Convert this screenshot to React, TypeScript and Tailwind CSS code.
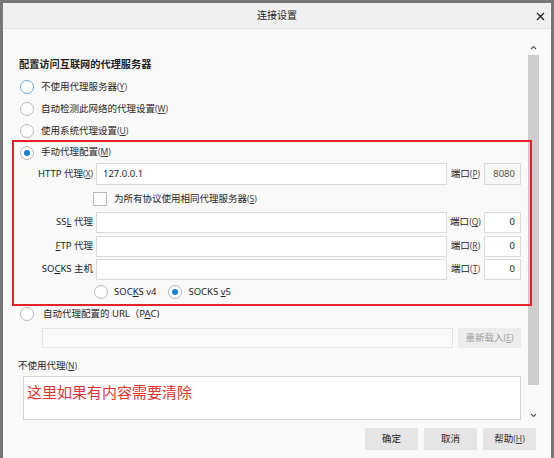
import React from "react";

const font = { fontFamily: '"Noto Sans", "Noto Sans CJK SC", sans-serif' };

function Key({ k }: { k: string }) {
  return (
    <span className="text-[8.5px] text-[#444]">
      (<span className="underline">{k}</span>)
    </span>
  );
}

function Radio({ checked, focus }: { checked?: boolean; focus?: boolean }) {
  return (
    <span
      className={`flex h-[14px] w-[14px] shrink-0 items-center justify-center rounded-full border bg-white ${
        focus ? "border-[#6aa6dc]" : "border-[#b9b9b9]"
      }`}
    >
      {checked && <span className="h-[6px] w-[6px] rounded-full bg-[#1a7dd0]" />}
    </span>
  );
}

function RadioRow({ label, k, checked, focus, h = "h-[22px]" }: { label: string; k: string; checked?: boolean; focus?: boolean; h?: string }) {
  return (
    <div className={`flex ${h} items-center gap-[7px] pl-[8px]`}>
      <Radio checked={checked} focus={focus} />
      <span className="whitespace-nowrap">
        {label}
        <Key k={k} />
      </span>
    </div>
  );
}

function ProxyRow({ label, k, port, value, portKey, mt, first }: { label: React.ReactNode; k?: string; port: string; value?: string; portKey: string; mt: string; first?: boolean }) {
  return (
    <div className={`flex h-[21px] items-stretch gap-[2px] ${mt}`}>
      <div className="flex w-[82px] items-center justify-end whitespace-nowrap pr-[1px]">
        {label}
        {k && <Key k={k} />}
      </div>
      <div className="flex flex-1 items-center border border-[#dadada] bg-white px-[6px]">{value}</div>
      <div className="flex w-[33px] items-center justify-center whitespace-nowrap">
        端口<Key k={portKey} />
      </div>
      <div
        className={`flex w-[37px] items-center justify-end border border-[#dadada] pr-[5px] ${
          first ? "bg-[#f6f6f6] text-[#555]" : "bg-white"
        }`}
      >
        {port}
      </div>
    </div>
  );
}

export default function App() {
  return (
    <div className="h-[458px] w-[554px] overflow-hidden bg-[#777] px-[3px] pt-[3px] text-[9.5px] text-[#1e1e1e]" style={font}>
      <div className="flex h-full flex-col bg-[#f9f9f9]">
        <div className="relative flex h-[26px] shrink-0 items-center justify-center border-b border-[#e2e2e2] bg-[#f0f0f0]">
          <span className="text-[10px]">连接设置</span>
          <svg className="absolute right-[6px] top-[9px]" width="9" height="9" viewBox="0 0 9 9">
            <path d="M1 1 L8 8 M8 1 L1 8" stroke="#222" strokeWidth="1.3" />
          </svg>
        </div>

        <div className="relative flex h-[394px] shrink-0">
          <div className="flex flex-1 flex-col pl-[9px] pr-[5px] pt-[27px]">
            <div className="ml-[7px] flex h-[18px] items-center text-[10.2px] font-bold">配置访问互联网的代理服务器</div>
            <div className="mt-[2px]">
              <RadioRow label="不使用代理服务器" k="Y" focus />
              <RadioRow label="自动检测此网络的代理设置" k="W" />
              <RadioRow label="使用系统代理设置" k="U" />
            </div>

            <RadioRow label="手动代理配置" k="M" checked h="h-[21px]" />
            <ProxyRow label="HTTP 代理" k="X" value="127.0.0.1" port="8080" portKey="P" mt="mt-0 h-[22px]" first />
            <div className="mt-[3px] flex h-[22px] items-center gap-[7px] pl-[81px]">
              <span className="h-[14px] w-[14px] border border-[#b9b9b9] bg-white" />
              <span className="whitespace-nowrap">
                为所有协议使用相同代理服务器
                <Key k="S" />
              </span>
            </div>
            <ProxyRow label={<span>SS<span className="underline">L</span> 代理</span>} port="0" portKey="Q" mt="mt-[2px]" />
            <ProxyRow label={<span><span className="underline">F</span>TP 代理</span>} port="0" portKey="R" mt="mt-[3px]" />
            <ProxyRow label={<span>SO<span className="underline">C</span>KS 主机</span>} port="0" portKey="T" mt="mt-[2px]" />
            <div className="mt-[1px] flex h-[22px] items-center pl-[82px]">
              <Radio />
              <span className="ml-[6px] whitespace-nowrap">
                SOC<span className="underline">K</span>S v4
              </span>
              <span className="ml-[12px]">
                <Radio checked />
              </span>
              <span className="ml-[6px] whitespace-nowrap">
                SOCKS <span className="underline">v</span>5
              </span>
            </div>

            <div className="mt-[1px] flex h-[20px] items-center gap-[9px] pl-[8px]">
              <Radio />
              <span className="whitespace-nowrap">
                自动代理配置的 URL（P<span className="underline">A</span>C)
              </span>
            </div>
            <div className="mt-[4px] flex h-[20px] gap-[5px] pl-[30px]">
              <div className="flex-1 border border-[#e3e3e3] bg-[#fafafa]" />
              <div className="flex w-[63px] items-center justify-center whitespace-nowrap bg-[#ececec] text-[#a0a0a0]">
                重新载入<span className="text-[8.5px]">(<span className="underline">E</span>)</span>
              </div>
            </div>

            <div className="ml-[6px] mt-[9px] flex h-[18px] items-center">
              不使用代理
              <Key k="N" />
            </div>
            <div className="ml-[11px] mt-[1px] h-[44px] border border-[#d4d4d4] bg-white px-[3px] pt-[3px] text-[15px] leading-[24px] text-[#e2342f]">
              这里如果有内容需要清除
            </div>
          </div>

          <div className="flex w-[14px] shrink-0 flex-col items-center">
            <svg className="mt-[16px]" width="7" height="5" viewBox="0 0 7 5">
              <path d="M1 4 L3.5 1.5 L6 4" stroke="#555" strokeWidth="1.1" fill="none" />
            </svg>
            <div className="mt-[5px] h-[330px] w-[11px] bg-[#cdcdcd]" />
            <div className="flex-1" />
            <svg className="mb-[5px]" width="7" height="5" viewBox="0 0 7 5">
              <path d="M1 1 L3.5 3.5 L6 1" stroke="#555" strokeWidth="1.1" fill="none" />
            </svg>
          </div>
          <div className="w-[11px] shrink-0" />

          <div className="pointer-events-none absolute left-[9px] top-[111px] h-[166px] w-[520px] border-2 border-[#e0242a]" />
        </div>

        <div className="flex flex-1 items-start justify-end gap-[6px] pr-[15px] pt-[5px]">
          <div className="flex h-[22px] w-[53px] items-center justify-center bg-[#e5e5e5]">确定</div>
          <div className="flex h-[22px] w-[53px] items-center justify-center bg-[#e5e5e5]">取消</div>
          <div className="flex h-[22px] w-[53px] items-center justify-center bg-[#e5e5e5]">
            帮助<Key k="H" />
          </div>
        </div>
      </div>
    </div>
  );
}
